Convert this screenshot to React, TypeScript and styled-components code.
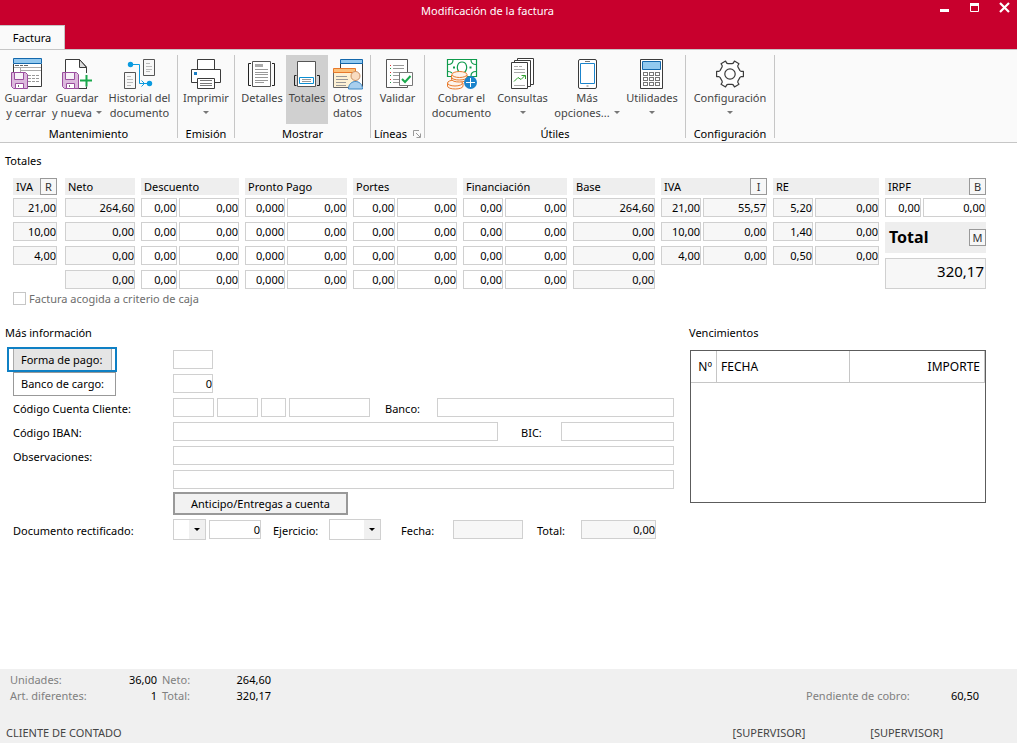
import React from "react";
import styled, { createGlobalStyle, css } from "styled-components";

const GlobalStyle = createGlobalStyle`
  *, *::before, *::after { box-sizing: border-box; }
  body { margin: 0; background: #fff; }
  body, button, input, select, table {
    font-family: "Noto Sans", "Open Sans", sans-serif;
    font-size: 11px;
    line-height: 15px;
    color: #000;
  }
`;

/* ---------- window frame ---------- */

const Window = styled.div`
  min-height: 100vh;
  display: flex;
  flex-direction: column;
`;

const TitleBar = styled.header`
  background: #c8002d;
  height: 49px;
  display: flex;
  flex-direction: column;
  justify-content: space-between;
`;

const TitleRow = styled.div`
  display: flex;
  align-items: flex-start;
  padding-left: 48px;
`;

const WindowTitle = styled.h1`
  flex: 1;
  margin: 0;
  padding-top: 3px;
  text-align: center;
  font-size: 11px;
  font-weight: 400;
  line-height: 15px;
  color: #fff;
`;

const WindowButton = styled.button`
  width: 30px;
  height: 16px;
  padding: 0 0 0 3px;
  border: 0;
  background: none;
  display: flex;
  justify-content: center;
  flex: none;

  svg { flex: none; }
`;

const TabList = styled.nav`
  display: flex;
`;

const Tab = styled.button`
  height: 24px;
  width: 65px;
  padding: 0;
  border: 1px solid #c6c6c6;
  border-width: 1px 1px 0 0;
  background: #fafafa;
`;

/* ---------- ribbon ---------- */

const Ribbon = styled.div`
  display: flex;
  height: 94px;
  padding: 5px 0 4px;
  background: #fafafa;
  border-top: 1px solid #c6c6c6;
  border-bottom: 1px solid #c6c6c6;
`;

const Group = styled.section<{ $pad?: number }>`
  display: flex;
  flex-direction: column;
  justify-content: space-between;
  border-right: 1px solid #c6c6c6;
  padding: 0 ${(p) => p.$pad ?? 0}px;
`;

const GroupButtons = styled.div`
  display: flex;
`;

const GroupLabel = styled.h2`
  display: flex;
  align-items: center;
  justify-content: center;
  gap: 6px;
  margin: 0;
  font-size: 11px;
  font-weight: 400;
  line-height: 9px;
  white-space: nowrap;
`;

const Tool = styled.button<{ $w: number; $active?: boolean }>`
  width: ${(p) => p.$w}px;
  height: 69px;
  padding: 3px 0 0;
  border: 0;
  background: ${(p) => (p.$active ? "#d0d0d0" : "none")};
  color: #444;
  display: flex;
  flex-direction: column;
  align-items: center;
  white-space: nowrap;

  svg { flex: none; }
`;

const ToolText = styled.span`
  display: flex;
  align-items: center;
  justify-content: center;
  gap: 4px;
  height: 15px;
`;

const Caret = styled.i<{ $dark?: boolean }>`
  width: 0;
  height: 0;
  border: 3px solid transparent;
  border-top-color: ${(p) => (p.$dark ? "#000" : "#777")};
  border-bottom: 0;
`;

/* ---------- page body ---------- */

const Body = styled.main`
  flex: 1;
  padding: 10px 31px 24px 13px;
`;

const SectionTitle = styled.h2<{ $flush?: boolean }>`
  margin: 0 0 0 ${(p) => (p.$flush ? -1 : -8)}px;
  font-size: 11px;
  font-weight: 400;
  line-height: 15px;
`;

const TotalsGrid = styled.div`
  display: grid;
  grid-template-columns: 46fr 70fr 98fr 102fr 104fr 104fr 82fr 106fr 106fr 101fr;
  column-gap: 6px;
  margin-top: 10px;
`;

const Column = styled.div<{ $inset?: boolean }>`
  min-width: 0;
  display: flex;
  flex-direction: column;
  gap: 5px;
  padding-right: ${(p) => (p.$inset ? 2 : 0)}px;
`;

const ColumnHead = styled.div`
  display: flex;
  align-items: center;
  justify-content: space-between;
  height: 17px;
  margin-bottom: -2px;
  padding-left: 3px;
  background: #eee;
  white-space: nowrap;
`;

const KeyButton = styled.button`
  width: 17px;
  height: 17px;
  padding: 0;
  border: 1px solid #999;
  background: #f7f7f7;
  color: #333;
  line-height: 15px;
`;

const Pair = styled.div<{ $first: number }>`
  display: grid;
  grid-template-columns: ${(p) => p.$first}px 1fr;
  gap: 2px;
`;

const fieldBox = css`
  height: 19px;
  min-width: 0;
  border: 1px solid #d0d0d0;
  border-radius: 0;
  background: #fff;
`;

const Field = styled.input<{ $w?: number; $left?: boolean }>`
  ${fieldBox}
  ${(p) => (p.$w ? `width: ${p.$w}px;` : "width: 100%; flex: 1;")}
  padding: 0 0 1px;
  text-align: ${(p) => (p.$left ? "left" : "right")};
  outline: none;

  &:read-only { background: #f7f7f7; }
`;

const TotalHead = styled.div`
  display: flex;
  align-items: center;
  justify-content: space-between;
  height: 31px;
  padding-left: 4px;
  background: #eee;
  font-size: 16px;
  font-weight: 700;
`;

const TotalField = styled(Field)`
  flex: none;
  height: 31px;
  font-size: 15px;
  padding: 0 1px 5px;
`;

const CheckLine = styled.label`
  display: flex;
  align-items: center;
  gap: 3px;
  height: 15px;
  margin-top: 2px;
  color: #6d6d6d;
`;

const CheckBox = styled.input`
  appearance: none;
  width: 13px;
  height: 13px;
  margin: 0;
  border: 1px solid #c6c6c6;
  background: #fff;
`;

const Lower = styled.div`
  display: grid;
  grid-template-columns: 661fr 296fr;
  column-gap: 16px;
  margin-top: 19px;
`;

const Form = styled.form`
  display: flex;
  flex-direction: column;
  gap: 5px;
  margin-top: 10px;
`;

const Row = styled.div<{ $spaced?: boolean }>`
  display: flex;
  align-items: center;
  gap: 3px;
  height: 19px;
  margin-top: ${(p) => (p.$spaced ? 2 : 0)}px;
`;

const Lead = styled.div`
  flex: none;
  width: 157px;
`;

const Caption = styled.label<{ $w?: number; $ml?: number }>`
  display: block;
  flex: none;
  width: ${(p) => (p.$w ? `${p.$w}px` : "auto")};
  margin-left: ${(p) => p.$ml ?? 0}px;
  padding-top: 2px;
  white-space: nowrap;
`;

const LinkButton = styled.button`
  display: block;
  width: 103px;
  height: 24px;
  padding: 0 0 0 7px;
  border: 1px solid #999;
  background: #fff;
  text-align: left;
`;

const FocusedButton = styled.button`
  display: block;
  width: 110px;
  height: 25px;
  margin-left: -6px;
  padding: 0 3px 0 4px;
  border: 2px solid #0f80c4;
  background: #fff;
`;

const FocusedFace = styled.span`
  display: flex;
  align-items: center;
  height: 21px;
  padding-left: 7px;
  border: 1px solid #aaa;
  border-width: 0 1px;
  background: #e5e5e5;
`;

const AdvanceButton = styled.button`
  width: 175px;
  height: 23px;
  flex: none;
  padding: 0;
  border: 2px solid #999;
  background: #f2f2f2;
`;

const SelectWrap = styled.span<{ $w: number }>`
  position: relative;
  flex: none;
  width: ${(p) => p.$w}px;
  height: 21px;

  select {
    ${fieldBox}
    appearance: none;
    width: 100%;
    height: 21px;
    padding: 0 16px 0 2px;
    background: linear-gradient(#f0f0f0, #f0f0f0) right / 16px 100% no-repeat #fff;
  }

  i {
    position: absolute;
    right: 6px;
    top: 9px;
    pointer-events: none;
  }
`;

const DueBox = styled.div`
  height: 153px;
  margin-top: 10px;
  border: 1px solid #5c5c5c;
`;

const DueTable = styled.table`
  width: 100%;
  border-collapse: separate;
  border-spacing: 0;
  table-layout: fixed;

  th {
    height: 32px;
    padding: 0 4px;
    border-right: 1px solid #c6c6c6;
    border-bottom: 1px solid #c6c6c6;
    font-size: 12px;
    font-weight: 400;
    text-align: left;
  }
  th:first-child { width: 26px; text-align: right; }
  th:nth-child(2) { width: 133px; }
  th:last-child { text-align: right; }
`;

/* ---------- status area ---------- */

const Footer = styled.footer`
  background: #f0f0f0;
  height: 74px;
  padding: 3px 0;
  display: flex;
  flex-direction: column;
  justify-content: space-between;
  color: #444;
`;

const Summary = styled.div`
  display: flex;
  align-items: flex-end;
  justify-content: space-between;
  padding: 0 38px 0 10px;
`;

const SummaryGrid = styled.dl<{ $cols: string }>`
  display: grid;
  grid-template-columns: ${(p) => p.$cols};
  line-height: 16px;
  margin: 0;

  dt { color: #808080; }
  dd { margin: 0; text-align: right; color: #000; }
  dt:nth-child(4n + 3) { padding-left: 5px; }
`;

const StatusBar = styled.div`
  display: flex;
  padding: 0 74px 0 6px;
  gap: 65px;

  span:first-child { flex: 1; }
`;

/* ---------- icons ---------- */

const DARK = "#3b3b3b";
const GREY = "#999";

const Icon = ({ children }: { children: React.ReactNode }) => (
  <svg width="32" height="32" viewBox="0 0 32 32" fill="none" aria-hidden="true">
    {children}
  </svg>
);

const Floppy = () => (
  <>
    <path d="M1.5 14.5H15.5L17.5 16.5V30.5H3.5L1.5 28.5Z" fill="#dcb9dd" stroke="#9a4d9e" />
    <path d="M4.5 14.5H13.5V21.5H4.5Z" fill="#f7f2f8" stroke="#9a4d9e" />
    <path d="M5.5 30.5V25.5H13.5V30.5Z" fill="#fff" stroke="#9a4d9e" />
    <path d="M8.5 27V29" stroke="#777" />
  </>
);

const SaveCloseIcon = () => (
  <Icon>
    <path d="M3.5 6V28.5H31.5V6" fill="#fff" stroke={DARK} />
    <path d="M3.5 .5H31.5V5.5H3.5Z" fill="#92c9ef" stroke="#1468ac" />
    <path d="M5 7.5H9M10 7.5H13M14 7.5H18" stroke="#666" />
    <path d="M4 9.5H31M10.5 12.5H31M10.5 10V14" stroke="#aaa" />
    <path d="M18 17.5H29M18 20.5H29M18 23.5H29" stroke={GREY} strokeDasharray="3 1" />
    <Floppy />
  </Icon>
);

const SaveNewIcon = () => (
  <Icon>
    <path d="M4.5 30V1.5H18.5L25.5 9V30.5H12" fill="#fff" stroke={DARK} />
    <path d="M18.5 1.5V9.5H25.5Z" fill="#ddd" stroke={DARK} />
    <path d="M24 15H27V30H24Z" fill="#fafafa" />
    <Floppy />
    <path d="M25.5 17V28.5M19 22.5H31" stroke="#1aa94c" strokeWidth="2" />
    <path d="M25.5 28.5V31M18 30.5H25" stroke={DARK} />
  </Icon>
);

const HistoryIcon = () => (
  <Icon>
    <path d="M19.5 1.5H30.5V17.5H19.5ZM.5 14.5H11.5V30.5H.5Z" fill="#f8f8f8" stroke="#555" />
    <path d="M22 5.5H26M22 8.5H28M22 11.5H28M22 13.5H26M3 18.5H7M3 21.5H9M3 24.5H9M3 27.5H7" stroke="#bbb" />
    <path d="M6 6.5H15.5V25.5H25M17.5 22.5L20.5 25.5L17.5 28.5" stroke="#0b9be0" />
    <circle cx="6.5" cy="6.5" r="2.7" fill="#0b9be0" />
    <circle cx="25.5" cy="25.5" r="2.7" fill="#0b9be0" />
  </Icon>
);

const PrinterIcon = () => (
  <Icon>
    <path d="M7.5 11V1.5H24.5V11M1.5 11.5H30.5V24.5H1.5Z" fill="#fff" stroke={DARK} />
    <path d="M4 14H7V17H4Z" fill="#1b7fc4" />
    <path d="M7.5 20.5H24.5V30.5H7.5Z" fill="#fff" stroke={DARK} />
    <path d="M10 22.5H22M10 25.5H22M10 27.5H22" stroke="#777" />
  </Icon>
);

const DetailsIcon = () => (
  <Icon>
    <path d="M6.5 3.5H24.5V28.5H6.5Z" fill="#fff" stroke="#555" />
    <path d="M5 5.5H2.5V27.5H5M26 5.5H28.5V27.5H26" stroke="#222" />
    <path d="M9 6H17V9H9Z" fill="#aaa" />
    <path d="M9 11.5H22M9 14.5H22M9 16.5H22M9 19.5H22M9 22.5H22M9 24.5H18" stroke={GREY} />
  </Icon>
);

const TotalsIcon = () => (
  <Icon>
    <path d="M6.5 3.5H24.5V28.5H6.5Z" fill="#fff" stroke="#555" />
    <path d="M5.5 17.5H3.5V27.5H5.5M26 17.5H28.5V27.5H26" stroke="#222" />
    <path d="M8.5 19.5H22.5V25.5H8.5Z" fill="#fff" stroke="#0b8fd4" />
    <path d="M11 21.5H20M11 23.5H20" stroke={GREY} />
  </Icon>
);

const OtherDataIcon = () => (
  <Icon>
    <path d="M8.5 5V28.5H30.5V5" fill="#fff" stroke={DARK} />
    <path d="M8.5 1.5H30.5V5.5H8.5Z" fill="#92c9ef" stroke="#1468ac" />
    <path d="M1.5 14V29.5H23.5V14" fill="#fdf1d4" stroke="#666" />
    <path d="M1.5 10.5H23.5V14.5H1.5Z" fill="#fbc17a" stroke="#e8792b" />
    <path d="M4 18.5H15M4 21.5H16M4 24.5H14M4 27.5H14" stroke={GREY} />
    <path d="M16.5 31C16.5 21 30.5 21 30.5 31Z" fill="#a8cfee" stroke="#3a86c4" />
    <circle cx="23.5" cy="18" r="4.5" fill="#f9dcc0" stroke="#c98f63" />
  </Icon>
);

const ValidateIcon = () => (
  <Icon>
    <path d="M4.5 1.5H25.5V29.5H4.5Z" fill="#fff" stroke="#555" />
    <path d="M8.5 7V8M8.5 14V15M8.5 21V22" stroke="#d33" />
    <path d="M8.5 10V11M8.5 17V18M8.5 24V25" stroke="#1a9a4a" />
    <path d="M11 7.5H22M11 10.5H22M11 14.5H18M11 17.5H18M11 21.5H18M11 24.5H18" stroke={GREY} />
    <path d="M17.5 14.5H30.5V27.5H17.5Z" fill="#fff" stroke="#777" />
    <path d="M20 21L23 24L28.5 18" stroke="#1aa94c" strokeWidth="2" />
  </Icon>
);

const CollectIcon = () => (
  <Icon>
    <g stroke="#0f9b4c" strokeWidth="1.2">
      <path d="M1.5 1.5H30.5V18.5H1.5Z" fill="#fff" />
      <path d="M2 6.5C5 6.5 7 5 7 2M25 2C25 5 27 6.5 30 6.5M30 13.5C27 13.5 25 15 25 18M2 13.5C4 13.5 5 14 6 15" />
      <path d="M13.5 14.5C9.5 10 11.5 4 16 4S22.5 10 18.5 14.5" />
      <path d="M7 9.5H9M23.5 9.5H25.5" strokeWidth="2" />
    </g>
    <g fill="#fdf3ea" stroke="#e8792b">
      <path d="M1.5 25V28C1.5 32 17 32 17 28V25" />
      <ellipse cx="9" cy="25" rx="7.5" ry="3" />
      <path d="M5.5 17V21C5.5 25 21 25 21 21V17" />
      <path d="M5.5 19C5.5 23 21 23 21 19" />
      <ellipse cx="13.5" cy="16.5" rx="7.5" ry="3" />
    </g>
    <circle cx="24.5" cy="24.5" r="6.5" fill="#1b84cc" />
    <path d="M24.5 20V29M20 24.5H29" stroke="#fff" />
  </Icon>
);

const QueriesIcon = () => (
  <Icon>
    <path d="M10.5 .5H26.5V26.5H10.5Z" fill="#fff" stroke={DARK} />
    <path d="M7.5 2.5H23.5V28.5H7.5Z" fill="#fff" stroke={DARK} />
    <path d="M4.5 4.5H20.5V30.5H4.5Z" fill="#fff" stroke={DARK} />
    <path d="M7 8.5H11M12 8.5H15M7 11.5H18M7 14.5H18M7 27.5H18" stroke="#aaa" />
    <path d="M7 23.5L11 19.5L14 21.5L18 17.5M14.5 17.5H18.5V21" stroke="#2fa02f" />
  </Icon>
);

const PhoneIcon = () => (
  <Icon>
    <rect x="7.5" y="1.5" width="18" height="29" rx="1.5" fill="#fff" stroke={DARK} />
    <path d="M9.5 5.5H23.5V25.5H9.5Z" stroke="#1b84cc" />
    <path d="M14 3.5H19M15.5 28H17.5" stroke="#777" />
  </Icon>
);

const CalculatorIcon = () => (
  <Icon>
    <path d="M4.5 1.5H26.5V30.5H4.5Z" fill="#fff" stroke={DARK} />
    <path d="M6.5 3.5H24.5V11.5H6.5Z" fill="#92c9ef" stroke="#1468ac" />
    {[14.5, 19.5, 24.5].map((y) =>
      [7.5, 13.5, 19.5].map((x) => (
        <rect key={`${x}-${y}`} x={x} y={y} width="4" height="3" stroke="#777" />
      ))
    )}
  </Icon>
);

const gearOutline = [0, 60, 120, 180, 240, 300]
  .flatMap((deg) => {
    const a = (deg * Math.PI) / 180;
    return [[10, -3.4], [11, -2.6], [13.4, -2.6], [13.4, 2.6], [11, 2.6], [10, 3.4]].map(
      ([x, y]) =>
        `${(16 + x * Math.cos(a) - y * Math.sin(a)).toFixed(2)},${(16 + x * Math.sin(a) + y * Math.cos(a)).toFixed(2)}`
    );
  })
  .join(" ");

const GearIcon = () => (
  <Icon>
    <polygon points={gearOutline} fill="#fff" stroke={DARK} strokeWidth="1.2" strokeLinejoin="round" />
    <circle cx="16" cy="16" r="5.2" stroke={DARK} strokeWidth="1.2" />
  </Icon>
);

const LauncherIcon = () => (
  <svg width="8" height="8" viewBox="0 0 8 8" fill="none" stroke="#999" aria-hidden="true">
    <path d="M.5 6V.5H6M3 3L7 7M3.5 7.5H7.5V3.5" />
  </svg>
);

/* ---------- pieces ---------- */

type ToolProps = {
  w: number;
  icon: React.ReactNode;
  lines: string[];
  menu?: boolean;
  active?: boolean;
};

const ToolButton = ({ w, icon, lines, menu, active }: ToolProps) => (
  <Tool type="button" $w={w} $active={active}>
    {icon}
    <ToolText>{lines[0]}</ToolText>
    {(lines[1] || menu) && (
      <ToolText>
        {lines[1]}
        {menu && <Caret />}
      </ToolText>
    )}
  </Tool>
);

type TotalsColumnProps = {
  title: string;
  letter?: string;
  first?: number;
  locked?: boolean;
  inset?: boolean;
  rows: string[][];
  children?: React.ReactNode;
};

const TotalsColumn = ({ title, letter, first = 40, locked, inset, rows, children }: TotalsColumnProps) => (
  <Column $inset={inset}>
    <ColumnHead>
      {title}
      {letter && <KeyButton type="button">{letter}</KeyButton>}
    </ColumnHead>
    {rows.map((row, i) => {
      const cells = row.map((value, j) => (
        <Field key={j} aria-label={`${title} ${i + 1}.${j + 1}`} defaultValue={value} readOnly={locked} />
      ));
      return row.length > 1 ? (
        <Pair key={i} $first={first}>{cells}</Pair>
      ) : (
        <Row key={i}>{cells}</Row>
      );
    })}
    {children}
  </Column>
);

const repeat = (row: string[]) => [row, row, row, row];

export default function App() {
  return (
    <Window>
      <GlobalStyle />
      <TitleBar>
        <TitleRow>
          <WindowTitle>Modificación de la factura</WindowTitle>
          <WindowButton type="button" aria-label="Minimizar">
            <svg width="16" height="16"><path d="M4 9H13V12H4Z" fill="#fff" /></svg>
          </WindowButton>
          <WindowButton type="button" aria-label="Maximizar">
            <svg width="16" height="16" fill="none" stroke="#fff">
              <path d="M4.5 5V11.5H12.5V5" />
              <path d="M4 4.5H13" strokeWidth="3" />
            </svg>
          </WindowButton>
          <WindowButton type="button" aria-label="Cerrar">
            <svg width="16" height="16"><path d="M4 3L13 12M13 3L4 12" stroke="#fff" strokeWidth="2.2" /></svg>
          </WindowButton>
        </TitleRow>
        <TabList>
          <Tab type="button">Factura</Tab>
        </TabList>
      </TitleBar>

      <Ribbon>
        <Group>
          <GroupButtons>
            <ToolButton w={52} icon={<SaveCloseIcon />} lines={["Guardar", "y cerrar"]} />
            <ToolButton w={50} icon={<SaveNewIcon />} lines={["Guardar", "y nueva"]} menu />
            <ToolButton w={75} icon={<HistoryIcon />} lines={["Historial del", "documento"]} />
          </GroupButtons>
          <GroupLabel>Mantenimiento</GroupLabel>
        </Group>
        <Group>
          <GroupButtons>
            <ToolButton w={56} icon={<PrinterIcon />} lines={["Imprimir"]} menu />
          </GroupButtons>
          <GroupLabel>Emisión</GroupLabel>
        </Group>
        <Group $pad={3}>
          <GroupButtons>
            <ToolButton w={48} icon={<DetailsIcon />} lines={["Detalles"]} />
            <ToolButton w={42} icon={<TotalsIcon />} lines={["Totales"]} active />
            <ToolButton w={39} icon={<OtherDataIcon />} lines={["Otros", "datos"]} />
          </GroupButtons>
          <GroupLabel>Mostrar</GroupLabel>
        </Group>
        <Group>
          <GroupButtons>
            <ToolButton w={53} icon={<ValidateIcon />} lines={["Validar"]} />
          </GroupButtons>
          <GroupLabel>
            Líneas
            <LauncherIcon />
          </GroupLabel>
        </Group>
        <Group $pad={4}>
          <GroupButtons>
            <ToolButton w={65} icon={<CollectIcon />} lines={["Cobrar el", "documento"]} />
            <ToolButton w={57} icon={<QueriesIcon />} lines={["Consultas"]} menu />
            <ToolButton w={72} icon={<PhoneIcon />} lines={["Más", "opciones..."]} menu />
            <ToolButton w={58} icon={<CalculatorIcon />} lines={["Utilidades"]} menu />
          </GroupButtons>
          <GroupLabel>Útiles</GroupLabel>
        </Group>
        <Group>
          <GroupButtons>
            <ToolButton w={88} icon={<GearIcon />} lines={["Configuración"]} menu />
          </GroupButtons>
          <GroupLabel>Configuración</GroupLabel>
        </Group>
      </Ribbon>

      <Body>
        <SectionTitle>Totales</SectionTitle>
        <TotalsGrid>
          <TotalsColumn title="IVA" letter="R" locked inset rows={[["21,00"], ["10,00"], ["4,00"]]} />
          <TotalsColumn title="Neto" locked rows={[["264,60"], ["0,00"], ["0,00"], ["0,00"]]} />
          <TotalsColumn title="Descuento" first={36} rows={repeat(["0,00", "0,00"])} />
          <TotalsColumn title="Pronto Pago" rows={repeat(["0,000", "0,00"])} />
          <TotalsColumn title="Portes" first={42} rows={repeat(["0,00", "0,00"])} />
          <TotalsColumn title="Financiación" rows={repeat(["0,00", "0,00"])} />
          <TotalsColumn title="Base" locked rows={[["264,60"], ["0,00"], ["0,00"], ["0,00"]]} />
          <TotalsColumn
            title="IVA"
            letter="I"
            locked
            rows={[["21,00", "55,57"], ["10,00", "0,00"], ["4,00", "0,00"]]}
          />
          <TotalsColumn
            title="RE"
            locked
            rows={[["5,20", "0,00"], ["1,40", "0,00"], ["0,50", "0,00"]]}
          />
          <TotalsColumn title="IRPF" letter="B" first={36} rows={[["0,00", "0,00"]]}>
            <TotalHead>
              <label htmlFor="total">Total</label>
              <KeyButton type="button">M</KeyButton>
            </TotalHead>
            <TotalField id="total" defaultValue="320,17" readOnly />
          </TotalsColumn>
        </TotalsGrid>
        <CheckLine>
          <CheckBox type="checkbox" />
          Factura acogida a criterio de caja
        </CheckLine>

        <Lower>
          <section>
            <SectionTitle>Más información</SectionTitle>
            <Form>
              <Row>
                <Lead>
                  <FocusedButton type="button">
                    <FocusedFace>Forma de pago:</FocusedFace>
                  </FocusedButton>
                </Lead>
                <Field $w={40} aria-label="Forma de pago" />
              </Row>
              <Row>
                <Lead>
                  <LinkButton type="button">Banco de cargo:</LinkButton>
                </Lead>
                <Field $w={40} aria-label="Banco de cargo" defaultValue="0" />
              </Row>
              <Row>
                <Lead><Caption htmlFor="ccc1">Código Cuenta Cliente:</Caption></Lead>
                <Field $w={41} id="ccc1" $left />
                <Field $w={41} aria-label="Oficina" $left />
                <Field $w={25} aria-label="Dígito de control" $left />
                <Field $w={81} aria-label="Cuenta" $left />
                <Caption htmlFor="bank" $w={49} $ml={12}>Banco:</Caption>
                <Field id="bank" $left />
              </Row>
              <Row>
                <Lead><Caption htmlFor="iban">Código IBAN:</Caption></Lead>
                <Field id="iban" $left />
                <Caption htmlFor="bic" $w={37} $ml={20}>BIC:</Caption>
                <Field id="bic" $w={113} $left />
              </Row>
              <Row>
                <Lead><Caption htmlFor="notes1">Observaciones:</Caption></Lead>
                <Field id="notes1" $left />
              </Row>
              <Row>
                <Lead />
                <Field aria-label="Observaciones, segunda línea" $left />
              </Row>
              <Row>
                <Lead />
                <AdvanceButton type="button">Anticipo/Entregas a cuenta</AdvanceButton>
              </Row>
              <Row $spaced>
                <Lead><Caption htmlFor="series">Documento rectificado:</Caption></Lead>
                <SelectWrap $w={33}>
                  <select id="series" />
                  <Caret $dark />
                </SelectWrap>
                <Field $w={52} aria-label="Número de documento" defaultValue="0" />
                <Caption htmlFor="year" $w={53} $ml={9}>Ejercicio:</Caption>
                <SelectWrap $w={52}>
                  <select id="year" />
                  <Caret $dark />
                </SelectWrap>
                <Caption htmlFor="date" $w={49} $ml={17}>Fecha:</Caption>
                <Field $w={70} id="date" readOnly />
                <Caption htmlFor="docTotal" $w={41} $ml={11}>Total:</Caption>
                <Field $w={75} id="docTotal" defaultValue="0,00" readOnly />
              </Row>
            </Form>
          </section>
          <section>
            <SectionTitle $flush>Vencimientos</SectionTitle>
            <DueBox>
              <DueTable>
                <thead>
                  <tr>
                    <th scope="col">Nº</th>
                    <th scope="col">FECHA</th>
                    <th scope="col">IMPORTE</th>
                  </tr>
                </thead>
              </DueTable>
            </DueBox>
          </section>
        </Lower>
      </Body>

      <Footer>
        <Summary>
          <SummaryGrid $cols="92px 55px 54px 60px">
            <dt>Unidades:</dt>
            <dd>36,00</dd>
            <dt>Neto:</dt>
            <dd>264,60</dd>
            <dt>Art. diferentes:</dt>
            <dd>1</dd>
            <dt>Total:</dt>
            <dd>320,17</dd>
          </SummaryGrid>
          <SummaryGrid $cols="113px 60px">
            <dt>Pendiente de cobro:</dt>
            <dd>60,50</dd>
          </SummaryGrid>
        </Summary>
        <StatusBar>
          <span>CLIENTE DE CONTADO</span>
          <span>[SUPERVISOR]</span>
          <span>[SUPERVISOR]</span>
        </StatusBar>
      </Footer>
    </Window>
  );
}
